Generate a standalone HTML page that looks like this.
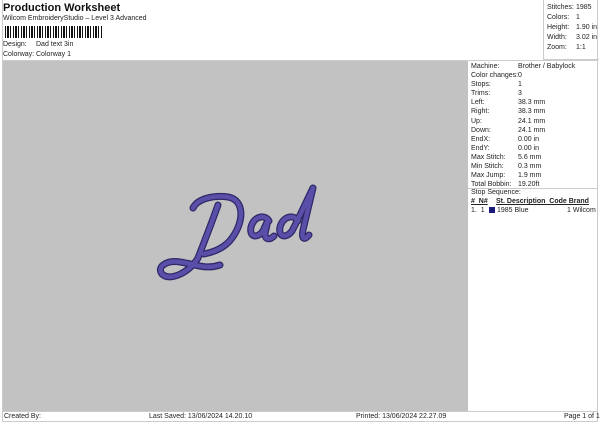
<!DOCTYPE html>
<html><head><style>
*{margin:0;padding:0;box-sizing:border-box}
body{width:600px;height:424px;background:#fff;font-family:"Liberation Sans",sans-serif;color:#222;position:relative;overflow:hidden;font-size:7px}
.a{position:absolute;white-space:nowrap}
</style></head><body>
<div class="a" style="left:3px;top:2px;font-size:11px;font-weight:bold;color:#111">Production Worksheet</div>
<div class="a" style="left:3px;top:15px">Wilcom EmbroideryStudio – Level 3 Advanced</div>
<div class="a" style="left:5px;top:26px;width:98px;height:12px;background:repeating-linear-gradient(90deg,#111 0 1px,#fff 1px 2px,#111 2px 4px,#fff 4px 5px,#111 5px 6px,#fff 6px 8px)"></div>
<div class="a" style="left:3px;top:41px">Design:</div><div class="a" style="left:36px;top:41px">Dad text 3in</div>
<div class="a" style="left:3px;top:51px">Colorway:</div><div class="a" style="left:36px;top:51px">Colorway 1</div>
<div class="a" style="left:2px;top:0;width:596px;height:422px;border:1px solid #ccc;border-top:none;border-bottom:none"></div>
<div class="a" style="left:543px;top:0;width:56px;height:60px;border-left:1px solid #ccc;border-bottom:1px solid #ccc"></div>
<div class="a" style="left:547px;top:3px;line-height:10px">Stitches:<br>Colors:<br>Height:<br>Width:<br>Zoom:</div>
<div class="a" style="left:576px;top:3px;line-height:10px">1985<br>1<br>1.90 in<br>3.02 in<br>1:1</div>
<div class="a" style="left:2px;top:60px;width:596px;height:1px;background:#ccc"></div>
<div class="a" style="left:3px;top:61px;width:465px;height:350px;background:#c2c2c2"></div>
<div class="a" style="left:471px;top:62px;line-height:9.1px">Machine:<br>Color changes:<br>Stops:<br>Trims:<br>Left:<br>Right:<br>Up:<br>Down:<br>EndX:<br>EndY:<br>Max Stitch:<br>Min Stitch:<br>Max Jump:<br>Total Bobbin:</div>
<div class="a" style="left:518px;top:62px;line-height:9.1px">Brother / Babylock<br>0<br>1<br>3<br>38.3 mm<br>38.3 mm<br>24.1 mm<br>24.1 mm<br>0.00 in<br>0.00 in<br>5.6 mm<br>0.3 mm<br>1.9 mm<br>19.20ft</div>
<div class="a" style="left:468px;top:188px;width:130px;height:1px;background:#ccc"></div>
<div class="a" style="left:471px;top:189px">Stop Sequence:</div>
<div class="a" style="left:471px;top:198px;font-weight:bold;text-decoration:underline">#&nbsp;&nbsp;N#</div>
<div class="a" style="left:496px;top:198px;font-weight:bold;text-decoration:underline;width:100px">St. Description&nbsp;&nbsp;Code&nbsp;Brand</div>
<div class="a" style="left:471px;top:207px">1.&nbsp;&nbsp;1</div>
<div class="a" style="left:489px;top:207px;width:6px;height:6px;background:#1c1a78"></div>
<div class="a" style="left:497px;top:207px">1985 Blue</div>
<div class="a" style="left:567px;top:207px">1 Wilcom</div>
<div class="a" style="left:2px;top:411px;width:596px;height:1px;background:#ccc"></div>
<div class="a" style="left:2px;top:421px;width:596px;height:1px;background:#ccc"></div>
<div class="a" style="left:4px;top:413px">Created By:</div>
<div class="a" style="left:149px;top:413px">Last Saved: 13/06/2024 14.20.10</div>
<div class="a" style="left:356px;top:413px">Printed: 13/06/2024 22.27.09</div>
<div class="a" style="left:564px;top:413px">Page 1 of 1</div>
<svg class="a" style="left:0;top:0" width="600" height="424">
<g fill="none" stroke-linecap="round" stroke-linejoin="round">
<g stroke="#2e2868" stroke-width="7">
<path d="M193 208 C198 198 215 195 228 197 C245 200 244 222 232 238 C225 248 214 252 204 254"/>
<path d="M218 205 C212 222 205 240 198 258 C190 272 170 282 162 274 C156 266 168 260 180 262 C195 264 205 270 220 265"/>
<path d="M269 221 C265 214 254 216 251 227 C249 237 257 239 263 231 L268 220 L265 234 C265 240 270 240 274 236"/>
<path d="M298 221 C294 214 283 216 280 227 C278 237 286 239 292 231 C298 220 308 198 313 188 L303 230 C301 240 305 240 309 235"/>
</g>
<g stroke="#5a4fa8" stroke-width="4.5">
<path d="M193 208 C198 198 215 195 228 197 C245 200 244 222 232 238 C225 248 214 252 204 254"/>
<path d="M218 205 C212 222 205 240 198 258 C190 272 170 282 162 274 C156 266 168 260 180 262 C195 264 205 270 220 265"/>
<path d="M269 221 C265 214 254 216 251 227 C249 237 257 239 263 231 L268 220 L265 234 C265 240 270 240 274 236"/>
<path d="M298 221 C294 214 283 216 280 227 C278 237 286 239 292 231 C298 220 308 198 313 188 L303 230 C301 240 305 240 309 235"/>
</g>
</g>
</svg>
</body></html>
